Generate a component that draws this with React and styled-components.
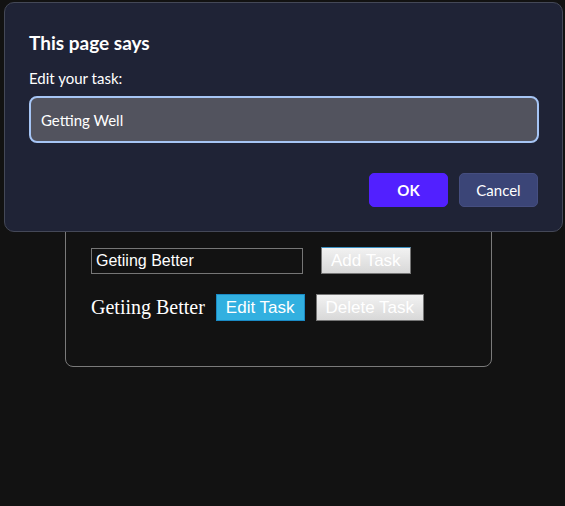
import React from "react";
import styled, { createGlobalStyle } from "styled-components";

const Global = createGlobalStyle`
  html, body {
    margin: 0;
    padding: 0;
    background: #121212;
  }
  body {
    width: 565px;
    height: 506px;
    overflow: hidden;
    position: relative;
  }
`;

const Page = styled.div`
  padding-top: 160px;
  color: #fff;
`;

const Card = styled.div`
  margin-left: 65px;
  width: 427px;
  height: 207px;
  border: 1px solid #7a7a7a;
  border-radius: 8px;
  padding: 86px 25px 0 25px;
  box-sizing: border-box;
  display: flex;
  flex-direction: column;
  gap: 20px;
`;

const Row = styled.div`
  display: flex;
  align-items: center;
  gap: ${(p) => p.$gap || 12}px;
`;

const TextInput = styled.input`
  width: 212px;
  height: 26px;
  box-sizing: border-box;
  background: #121212;
  border: 1px solid #767676;
  color: #fff;
  font-family: "Liberation Sans", Arial, sans-serif;
  font-size: 16px;
  padding: 0 4px;
  outline: none;
`;

const Btn = styled.button`
  height: 27px;
  box-sizing: border-box;
  padding: 0 9px;
  font-family: "Liberation Sans", Arial, sans-serif;
  font-size: 17px;
  color: #fff;
  border: 1px solid ${(p) => (p.$primary ? "#1a8ac4" : "#767676")};
  ${(p) => p.$focus && "border-top: 1px solid #3a8fc0;"}
  background: ${(p) =>
    p.$primary ? "#32b0e0" : "linear-gradient(#f2f2f2, #d8d8d8)"};
  cursor: pointer;
`;

const TaskText = styled.span`
  font-family: "Liberation Serif", "Times New Roman", serif;
  font-size: 20px;
  color: #fff;
`;

const Dialog = styled.div`
  position: absolute;
  left: 4px;
  top: 2px;
  width: 559px;
  height: 230px;
  box-sizing: border-box;
  background: #1f2336;
  border: 1px solid #444857;
  border-radius: 10px;
  padding: 27px 23px 0 24px;
  font-family: Lato, "Open Sans", sans-serif;
  color: #fff;
  display: flex;
  flex-direction: column;
`;

const Title = styled.div`
  font-size: 19px;
  font-weight: 700;
  line-height: 26px;
`;

const Label = styled.div`
  font-size: 15px;
  line-height: 20px;
  margin-top: 12px;
`;

const PromptInput = styled.div`
  margin-top: 8px;
  height: 47px;
  box-sizing: border-box;
  background: #52535e;
  border: 2px solid #a6c5f5;
  border-radius: 8px;
  padding: 0 10px;
  display: flex;
  align-items: center;
  font-size: 15px;
`;

const Actions = styled.div`
  margin-top: 30px;
  display: flex;
  justify-content: flex-end;
  gap: 11px;
  padding-right: 1px;
`;

const DialogBtn = styled.button`
  width: 79px;
  height: 34px;
  border-radius: 5px;
  border: 1px solid ${(p) => (p.$primary ? "#5220ff" : "#454e80")};
  background: ${(p) => (p.$primary ? "#5220ff" : "#3b4577")};
  color: #fff;
  font-family: Lato, "Open Sans", sans-serif;
  font-size: 15px;
  font-weight: ${(p) => (p.$primary ? 700 : 400)};
`;

export default function App() {
  return (
    <>
      <Global />
      <Page>
        <Card>
          <Row $gap={18}>
            <TextInput defaultValue="Getiing Better" />
            <Btn $focus>Add Task</Btn>
          </Row>
          <Row $gap={11}>
            <TaskText>Getiing Better</TaskText>
            <Btn $primary>Edit Task</Btn>
            <Btn>Delete Task</Btn>
          </Row>
        </Card>
      </Page>
      <Dialog>
        <Title>This page says</Title>
        <Label>Edit your task:</Label>
        <PromptInput>Getting Well</PromptInput>
        <Actions>
          <DialogBtn $primary>OK</DialogBtn>
          <DialogBtn>Cancel</DialogBtn>
        </Actions>
      </Dialog>
    </>
  );
}
